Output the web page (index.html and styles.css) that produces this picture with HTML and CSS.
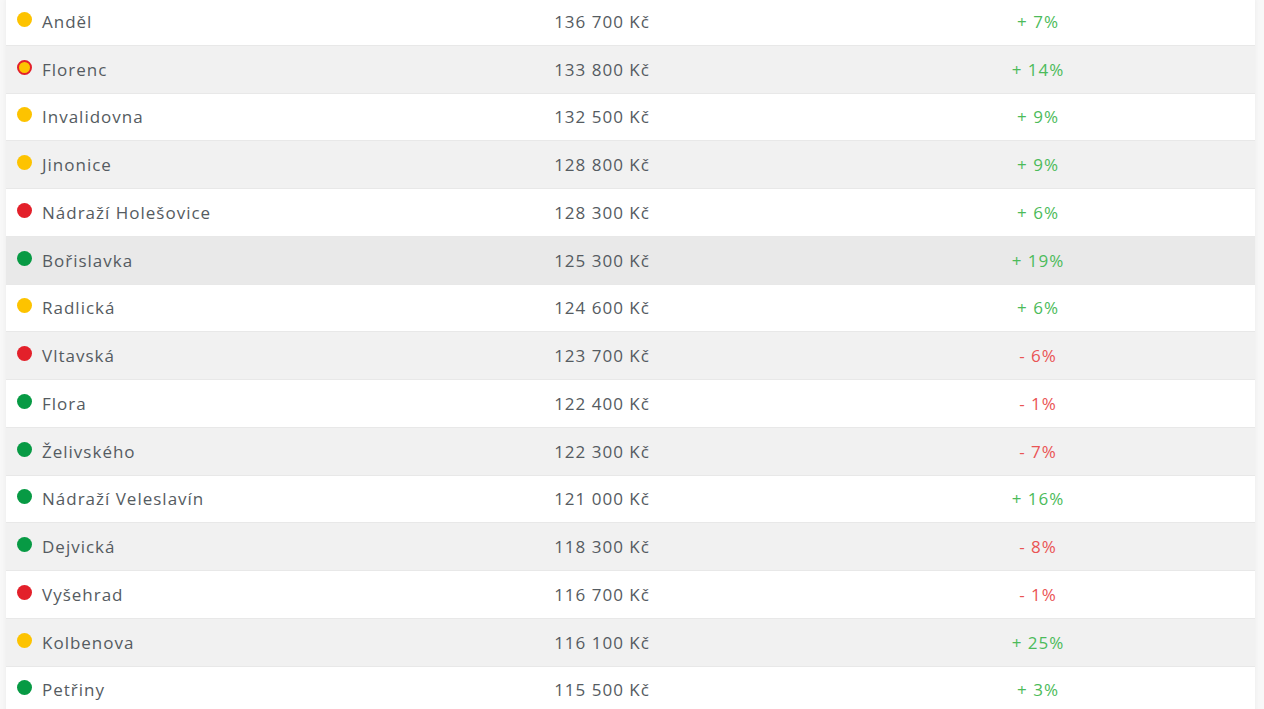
FILE: index.html
```html
<!DOCTYPE html>
<html lang="cs">
<head>
<meta charset="utf-8">
<link rel="stylesheet" href="styles.css">
</head>
<body>
<div class="page">
  <div class="table">
    <div class="row"><div class="name"><span class="dot yellow"></span>Anděl</div><div class="price">136 700 Kč</div><div class="chg up">+ 7%</div></div>
    <div class="row"><div class="name"><span class="dot yr"></span>Florenc</div><div class="price">133 800 Kč</div><div class="chg up">+ 14%</div></div>
    <div class="row"><div class="name"><span class="dot yellow"></span>Invalidovna</div><div class="price">132 500 Kč</div><div class="chg up">+ 9%</div></div>
    <div class="row"><div class="name"><span class="dot yellow"></span>Jinonice</div><div class="price">128 800 Kč</div><div class="chg up">+ 9%</div></div>
    <div class="row"><div class="name"><span class="dot red"></span>Nádraží Holešovice</div><div class="price">128 300 Kč</div><div class="chg up">+ 6%</div></div>
    <div class="row hover"><div class="name"><span class="dot green"></span>Bořislavka</div><div class="price">125 300 Kč</div><div class="chg up">+ 19%</div></div>
    <div class="row"><div class="name"><span class="dot yellow"></span>Radlická</div><div class="price">124 600 Kč</div><div class="chg up">+ 6%</div></div>
    <div class="row"><div class="name"><span class="dot red"></span>Vltavská</div><div class="price">123 700 Kč</div><div class="chg down">- 6%</div></div>
    <div class="row"><div class="name"><span class="dot green"></span>Flora</div><div class="price">122 400 Kč</div><div class="chg down">- 1%</div></div>
    <div class="row"><div class="name"><span class="dot green"></span>Želivského</div><div class="price">122 300 Kč</div><div class="chg down">- 7%</div></div>
    <div class="row"><div class="name"><span class="dot green"></span>Nádraží Veleslavín</div><div class="price">121 000 Kč</div><div class="chg up">+ 16%</div></div>
    <div class="row"><div class="name"><span class="dot green"></span>Dejvická</div><div class="price">118 300 Kč</div><div class="chg down">- 8%</div></div>
    <div class="row"><div class="name"><span class="dot red"></span>Vyšehrad</div><div class="price">116 700 Kč</div><div class="chg down">- 1%</div></div>
    <div class="row"><div class="name"><span class="dot yellow"></span>Kolbenova</div><div class="price">116 100 Kč</div><div class="chg up">+ 25%</div></div>
    <div class="row"><div class="name"><span class="dot green"></span>Petřiny</div><div class="price">115 500 Kč</div><div class="chg up">+ 3%</div></div>
  </div>
</div>
</body>
</html>
```
FILE: styles.css
```css
html, body {
  margin: 0;
  padding: 0;
  background: #f8f8f8;
  overflow: hidden;
}
.page {
  padding: 0 9px 0 6px;
  height: 709px;
  overflow: hidden;
}
.table {
  margin-top: -2px;
  background: #fff;
  box-shadow: 0 0 6px rgba(0,0,0,0.06);
  font-family: "Open Sans", "Noto Sans", sans-serif;
  font-size: 17px;
  letter-spacing: 1px;
  color: #555b61;
}
.row {
  display: grid;
  grid-template-columns: 377px 438px 1fr;
  align-items: center;
  height: 47.75px;
  box-sizing: border-box;
  border-bottom: 1px solid #e8e8e8;
  background: #fff;
}
.row:nth-child(even) {
  background: #f1f1f1;
}
.row.hover {
  background: #e9e9e9;
}
.name {
  display: flex;
  align-items: center;
  padding-left: 11px;
}
.dot {
  width: 15px;
  height: 15px;
  border-radius: 50%;
  margin-right: 10px;
  box-sizing: border-box;
  position: relative;
  top: -2px;
}
.yellow { background: #fdc300; }
.green { background: #079a44; }
.red { background: #e3202a; }
.yr { background: #fdc300; border: 2px solid #e3202a; }
.price, .chg {
  text-align: center;
}
.up { color: #4cbb5a; }
.down { color: #ea5454; }
```
